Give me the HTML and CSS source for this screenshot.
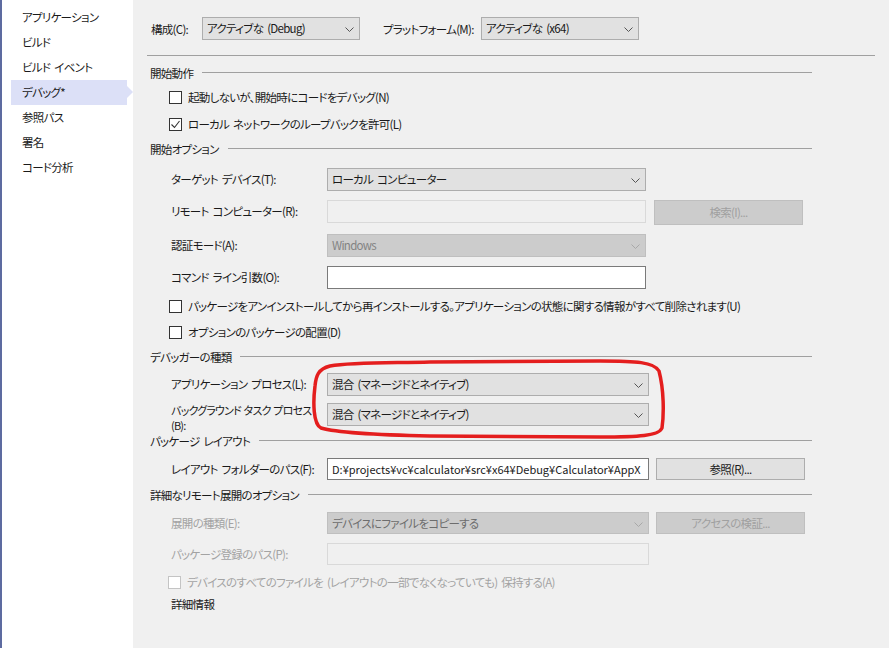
FILE: index.html
```html
<!DOCTYPE html>
<html>
<head>
  <meta charset="UTF-8">
  <title>デバッグ プロパティ</title>
  <link rel="stylesheet" href="styles.css">
</head>
<body>
  <div class="window">
    <!-- Left: page list -->
    <nav class="sidebar">
      <div class="navItem">アプリケーション</div>
      <div class="navItem">ビルド</div>
      <div class="navItem">ビルド イベント</div>
      <div class="navItem active">デバッグ*</div>
      <div class="navItem">参照パス</div>
      <div class="navItem">署名</div>
      <div class="navItem">コード分析</div>
    </nav>

    <!-- Right: property page -->
    <main class="page">
      <div class="topbar">
        <span class="topLabel cfg">構成(C):</span>
        <div class="select topSelect">アクティブな (Debug)
          <svg class="chev" width="9" height="5" viewBox="0 0 9 5"><polyline points="0.5,0.5 4.5,4.5 8.5,0.5"/></svg>
        </div>
        <span class="topLabel plat">プラットフォーム(M):</span>
        <div class="select topSelect">アクティブな (x64)
          <svg class="chev" width="9" height="5" viewBox="0 0 9 5"><polyline points="0.5,0.5 4.5,4.5 8.5,0.5"/></svg>
        </div>
      </div>
      <div class="rule"></div>

      <div class="groupTitle t1">開始動作</div>
      <div class="check c1"><span class="box"></span>起動しないが、開始時にコードをデバッグ(N)</div>
      <div class="check c2"><span class="box">
        <svg width="11" height="11" viewBox="0 0 11 11"><polyline points="1.5,5.5 4.5,8.5 9.5,2"/></svg>
      </span>ローカル ネットワークのループバックを許可(L)</div>

      <div class="groupTitle t2">開始オプション</div>
      <div class="field f1">
        <span class="label">ターゲット デバイス(T):</span>
        <div class="select wide">ローカル コンピューター
          <svg class="chev" width="9" height="5" viewBox="0 0 9 5"><polyline points="0.5,0.5 4.5,4.5 8.5,0.5"/></svg>
        </div>
      </div>
      <div class="field f2">
        <span class="label">リモート コンピューター(R):</span>
        <div class="input wide off"></div>
        <div class="button off findBtn">検索(I)...</div>
      </div>
      <div class="field f3">
        <span class="label">認証モード(A):</span>
        <div class="select wide off">Windows
          <svg class="chev" width="9" height="5" viewBox="0 0 9 5"><polyline points="0.5,0.5 4.5,4.5 8.5,0.5"/></svg>
        </div>
      </div>
      <div class="field f4">
        <span class="label">コマンド ライン引数(O):</span>
        <div class="input wide"></div>
      </div>
      <div class="check c3"><span class="box"></span>パッケージをアンインストールしてから再インストールする。アプリケーションの状態に関する情報がすべて削除されます(U)</div>
      <div class="check c4"><span class="box"></span>オプションのパッケージの配置(D)</div>

      <div class="groupTitle t3">デバッガーの種類</div>
      <div class="field f5">
        <span class="label">アプリケーション プロセス(L):</span>
        <div class="select wider">混合 (マネージドとネイティブ)
          <svg class="chev" width="9" height="5" viewBox="0 0 9 5"><polyline points="0.5,0.5 4.5,4.5 8.5,0.5"/></svg>
        </div>
      </div>
      <div class="field f6 tall">
        <span class="label twoLine">バックグラウンド タスク プロセス<br>(B):</span>
        <div class="select wider">混合 (マネージドとネイティブ)
          <svg class="chev" width="9" height="5" viewBox="0 0 9 5"><polyline points="0.5,0.5 4.5,4.5 8.5,0.5"/></svg>
        </div>
      </div>

      <div class="groupTitle t4">パッケージ レイアウト</div>
      <div class="field f7">
        <span class="label">レイアウト フォルダーのパス(F):</span>
        <div class="input wider path">D:¥projects¥vc¥calculator¥src¥x64¥Debug¥Calculator¥AppX</div>
        <div class="button browseBtn">参照(R)...</div>
      </div>

      <div class="groupTitle t5">詳細なリモート展開のオプション</div>
      <div class="field f8 dim">
        <span class="label">展開の種類(E):</span>
        <div class="select wider off dark">デバイスにファイルをコピーする
          <svg class="chev" width="9" height="5" viewBox="0 0 9 5"><polyline points="0.5,0.5 4.5,4.5 8.5,0.5"/></svg>
        </div>
        <div class="button off browseBtn">アクセスの検証...</div>
      </div>
      <div class="field f9 dim">
        <span class="label">パッケージ登録のパス(P):</span>
        <div class="input wider off"></div>
      </div>
      <div class="check c5 dim"><span class="box"></span>デバイスのすべてのファイルを (レイアウトの一部でなくなっていても) 保持する(A)</div>
      <div class="moreInfo">詳細情報</div>
    </main>

    <!-- hand-drawn highlight over the debugger type dropdowns -->
    <svg class="marker" width="889" height="648" viewBox="0 0 889 648">
      <path d="M330 366 C352 362 390 363 430 362 L600 361 C636 361 654 362 659 371 C664 390 664 414 662 428 C659 436 638 437 600 437 L430 436 C380 435 338 433 321 428 C313 424 313 402 315 386 C316 376 318 369 330 366"/>
    </svg>
  </div>
</body>
</html>
```

FILE: styles.css
```css
body {
  margin: 0;
  font-family: "Noto Sans CJK JP", sans-serif;
  font-size: 11.5px;
  letter-spacing: -0.7px;
  word-spacing: 2px;
  font-feature-settings: "palt";
  color: #1a1a1a;
  background-color: #f0f0f0;
}
.window {
  display: flex;
  height: 648px;
  position: relative;
  overflow: hidden;
}

/* Left column: page list */
.sidebar {
  width: 131px;
  border-left: 2px solid #5d6ba0;
  background-color: #fff;
  padding-top: 5px;
}
.navItem {
  position: relative;
  height: 25px;
  line-height: 25px;
  margin-left: 9px;
  width: 105px;
  padding-left: 11px;
}
.navItem.active {
  background-color: #dce0f7;
}
.navItem.active::after {
  content: "";
  position: absolute;
  right: -6px;
  top: 6px;
  border-left: 6px solid #dce0f7;
  border-top: 6.5px solid transparent;
  border-bottom: 6.5px solid transparent;
}

/* Right column: property page */
.page {
  flex: 1;
  padding: 17px 14px 0 14px;
}
.topbar {
  display: flex;
  align-items: center;
  height: 23px;
  padding-left: 4px;
}
.topLabel {
  white-space: nowrap;
}
.topLabel.cfg {
  width: 51px;
}
.topLabel.plat {
  width: 98px;
  margin-left: 23px;
}
.topSelect {
  width: 158px;
}
.rule {
  margin-top: 15px;
  border-top: 1px solid #a0a0a0;
}

/* group headings with trailing line */
.groupTitle {
  display: flex;
  align-items: center;
  height: 16px;
  padding-left: 3px;
  margin-right: 63px;
  white-space: nowrap;
}
.groupTitle::after {
  content: "";
  flex: 1;
  border-top: 1px solid #a0a0a0;
  margin-left: 9px;
  margin-top: -2px;
}
.t1 { margin-top: 9px; }
.t2 { margin-top: 7px; }
.t3 { margin-top: 7px; }
.t4 { margin-top: 0; }
.t5 { margin-top: 7px; }

/* checkboxes */
.check {
  display: flex;
  align-items: center;
  height: 20px;
  padding-left: 22px;
  white-space: nowrap;
}
.check .box {
  width: 11px;
  height: 11px;
  border: 1px solid #333;
  background-color: #fff;
  margin-right: 6px;
  display: flex;
}
.check .box polyline {
  fill: none;
  stroke: #333;
  stroke-width: 1.1;
}
.c1 { margin-top: 6px; }
.c2 { margin-top: 7px; }
.c3 { margin-top: 7px; }
.c4 { margin-top: 6px; }
.c5 { margin-top: 7px; padding-left: 21px; }
.check.dim { color: #a3a3a3; }
.check.dim .box { border-color: #c4c4c4; }

/* label + control rows */
.field {
  display: flex;
  align-items: flex-start;
  height: 23px;
  padding-left: 24px;
}
.field .label {
  width: 156px;
  flex: none;
  line-height: 23px;
  white-space: nowrap;
}
.field .label.twoLine {
  width: 150px;
  margin-right: 6px;
  font-size: 11px;
  line-height: 15px;
  letter-spacing: -0.8px;
  word-spacing: 1px;
}
.field.tall { height: auto; }
.f1 { margin-top: 11px; }
.f2 { margin-top: 9px; }
.f3 { margin-top: 11px; }
.f4 { margin-top: 9px; }
.f5 { margin-top: 8px; }
.f6 { margin-top: 7px; }
.f7 { margin-top: 9px; height: 22px; }
.f8 { margin-top: 9px; height: 22px; }
.f9 { margin-top: 9px; height: 22px; }
.f7 .label, .f8 .label, .f9 .label { line-height: 22px; }
.field.dim .label { color: #a3a3a3; }

.select {
  position: relative;
  box-sizing: border-box;
  height: 23px;
  line-height: 21px;
  padding-left: 4px;
  background-color: #e1e1e1;
  border: 1px solid #adadad;
  white-space: nowrap;
}
.select .chev {
  position: absolute;
  right: 5px;
  top: 9px;
}
.chev polyline {
  fill: none;
  stroke: #555;
  stroke-width: 1;
}
.select.off {
  background-color: #cccccc;
  border-color: #bfbfbf;
  color: #838383;
}
.select.off.dark { color: #6d6d6d; }
.select.off .chev polyline { stroke: #a8a8a8; }

.input {
  box-sizing: border-box;
  height: 23px;
  background-color: #fff;
  border: 1px solid #7a7a7a;
}
.input.off {
  background-color: #f0f0f0;
  border-color: #d9d9d9;
}
.input.path {
  font-size: 11px;
  letter-spacing: 0;
  line-height: 20px;
  padding-left: 4px;
  overflow: hidden;
  white-space: nowrap;
}
.wide { width: 319px; }
.wider { width: 322px; }
.f7 .select, .f7 .input, .f8 .select, .f9 .input,
.f7 .button, .f8 .button { height: 22px; }
.f8 .select { line-height: 20px; }

.button {
  box-sizing: border-box;
  height: 25px;
  line-height: 23px;
  text-align: center;
  background-color: #e1e1e1;
  border: 1px solid #adadad;
}
.button.off {
  background-color: #cccccc;
  border-color: #bfbfbf;
  color: #a0a0a0;
}
.findBtn {
  width: 149px;
  margin-left: 8px;
}
.browseBtn {
  width: 149px;
  margin-left: 7px;
  line-height: 20px;
}

.moreInfo {
  margin-top: 4px;
  height: 16px;
  line-height: 16px;
  padding-left: 24px;
}

/* red hand-drawn ring sits over the content */
.marker {
  position: absolute;
  left: 0;
  top: 0;
  pointer-events: none;
}
.marker path {
  fill: none;
  stroke: #e41e1e;
  stroke-width: 3.5;
  stroke-linecap: round;
}
```
